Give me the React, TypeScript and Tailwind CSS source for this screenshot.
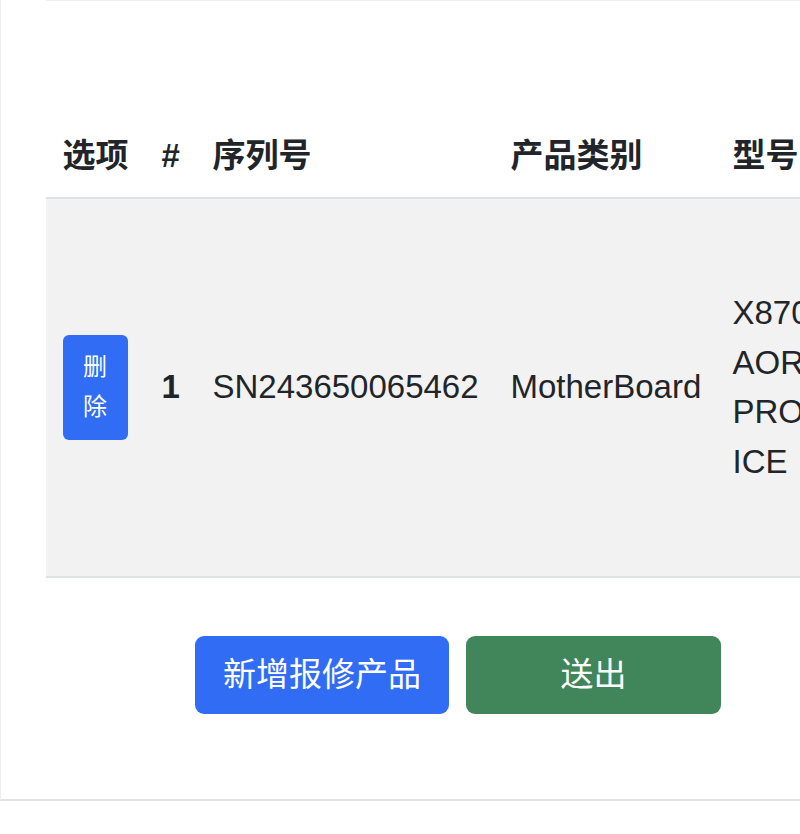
import React from "react";

const font = { fontFamily: '"Liberation Sans", "Noto Sans CJK SC", sans-serif' };

export default function App() {
  return (
    <div className="w-[800px] h-[834px] overflow-hidden bg-white text-[#212529]" style={font}>
      <div className="h-[801px] border-l border-l-[#eceef1] border-b-2 border-b-[#e0e2e8] flex flex-col">
        <div className="ml-[45px] border-t border-t-[#eceef0] h-[114px] shrink-0" />
        <div className="ml-[45px] overflow-hidden shrink-0">
          <table className="table-fixed border-collapse w-[1000px] text-[33px] leading-[49.5px]">
            <colgroup>
              <col className="w-[99px]" />
              <col className="w-[51px]" />
              <col className="w-[298px]" />
              <col className="w-[222px]" />
              <col className="w-[151px]" />
              <col className="w-[179px]" />
            </colgroup>
            <thead>
              <tr className="border-b-2 border-b-[#dee2e6]">
                <th className="text-left font-bold px-[16.5px] py-[16.5px] whitespace-nowrap">选项</th>
                <th className="text-left font-bold px-[16.5px] py-[16.5px]">#</th>
                <th className="text-left font-bold px-[16.5px] py-[16.5px] whitespace-nowrap">序列号</th>
                <th className="text-left font-bold px-[16.5px] py-[16.5px] whitespace-nowrap">产品类别</th>
                <th className="text-left font-bold px-[16.5px] py-[16.5px] whitespace-nowrap">型号</th>
                <th className="text-left font-bold px-[16.5px] py-[16.5px] whitespace-nowrap">数量</th>
              </tr>
            </thead>
            <tbody>
              <tr className="bg-[#f2f2f2] border-b-2 border-b-[#dee2e6] h-[379px]">
                <td className="px-[16.5px] align-middle">
                  <button className="w-[65px] h-[105px] rounded-[6px] bg-[#316cf4] text-white text-[24px] leading-[40px] flex flex-col items-center justify-center">
                    <span>删</span>
                    <span>除</span>
                  </button>
                </td>
                <td className="px-[16.5px] align-middle font-bold">1</td>
                <td className="px-[16.5px] align-middle whitespace-nowrap">SN243650065462</td>
                <td className="px-[16.5px] align-middle whitespace-nowrap">MotherBoard</td>
                <td className="px-[16.5px] align-middle">X870E AORUS PRO ICE</td>
                <td className="px-[16.5px] align-middle">1</td>
              </tr>
            </tbody>
          </table>
        </div>
        <div className="flex gap-[17px] ml-[194px] mt-[58px]">
          <button className="w-[254px] h-[78px] rounded-[9px] bg-[#316cf4] text-white text-[33px] flex items-center justify-center">
            新增报修产品
          </button>
          <button className="w-[255px] h-[78px] rounded-[9px] bg-[#40865a] text-white text-[33px] flex items-center justify-center">
            送出
          </button>
        </div>
      </div>
    </div>
  );
}
